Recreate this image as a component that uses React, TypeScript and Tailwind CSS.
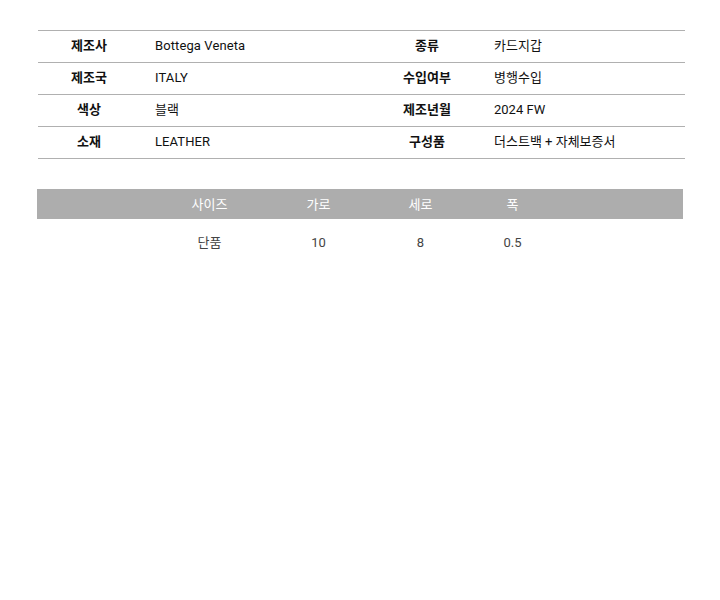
const info = [
  ['제조사', 'Bottega Veneta', '종류', '카드지갑'],
  ['제조국', 'ITALY', '수입여부', '병행수입'],
  ['색상', '블랙', '제조년월', '2024 FW'],
  ['소재', 'LEATHER', '구성품', '더스트백 + 자체보증서'],
];

const sizeCols = [
  { head: '사이즈', val: '단품', w: 'w-[109px]' },
  { head: '가로', val: '10', w: 'w-[109px]' },
  { head: '세로', val: '8', w: 'w-[95px]' },
  { head: '폭', val: '0.5', w: 'w-[89px]' },
];

export default function App() {
  return (
    <div
      className="w-[720px] h-[600px] bg-white pt-[30px]"
      style={{ fontFamily: 'Roboto, "Noto Sans CJK KR", sans-serif' }}
    >
      {/* product info */}
      <div className="ml-[38px] w-[647px] border-t border-[#b0b0b0] text-[13px] text-[#111]">
        {info.map((r) => (
          <div key={r[0]} className="flex h-[32px] items-center border-b border-[#b0b0b0] pb-[1px]">
            <div className="w-[102px] text-center font-bold">{r[0]}</div>
            <div className="w-[236px] pl-[15px] tracking-[0.1px]">{r[1]}</div>
            <div className="w-[102px] text-center font-bold">{r[2]}</div>
            <div className="flex-1 pl-[16px]">{r[3]}</div>
          </div>
        ))}
      </div>

      {/* size table */}
      <div className="ml-[37px] mt-[30px] w-[646px] text-[13px]">
        <div className="flex h-[30px] items-center bg-[#adadad] pt-[1px] text-white">
          <div className="w-[118px]" />
          {sizeCols.map((c) => (
            <div key={c.head} className={`${c.w} text-center`}>{c.head}</div>
          ))}
        </div>
        <div className="flex h-[48px] items-center text-[#444]">
          <div className="w-[118px]" />
          {sizeCols.map((c) => (
            <div key={c.head} className={`${c.w} text-center`}>{c.val}</div>
          ))}
        </div>
      </div>
    </div>
  );
}
